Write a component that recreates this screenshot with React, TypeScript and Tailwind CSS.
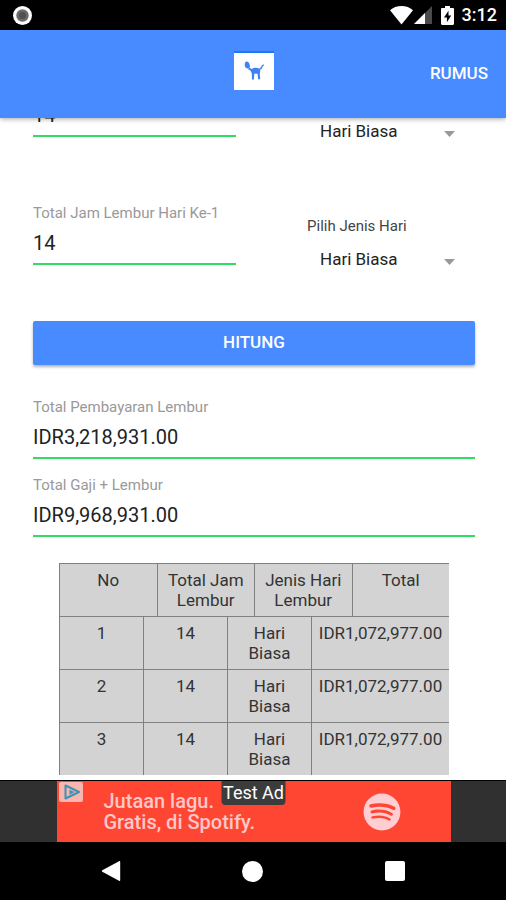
import { useId, useState } from 'react';
import { FaSpotify } from 'react-icons/fa';

const DAY_TYPES = ['Hari Biasa', 'Hari Libur'];

const RESULTS = [
  { no: 1, hours: 14, type: 'Hari Biasa', total: 'IDR1,072,977.00' },
  { no: 2, hours: 14, type: 'Hari Biasa', total: 'IDR1,072,977.00' },
  { no: 3, hours: 14, type: 'Hari Biasa', total: 'IDR1,072,977.00' },
];

function StatusBar() {
  return (
    <div className="flex h-[30px] shrink-0 items-center justify-between bg-black pl-[13px] pr-[9px] text-white">
      <svg width="19" height="19" viewBox="0 0 19 19">
        <circle cx="9.5" cy="9.5" r="9.5" fill="#fff" />
        <circle cx="9.5" cy="9.5" r="6.2" fill="#6b6b6b" />
        <circle cx="9.5" cy="9.5" r="3.5" fill="#505050" />
      </svg>
      <div className="flex items-center">
        <svg width="23" height="19" viewBox="0 0 23 19" fill="#fff">
          <path d="M0 4.2C3 1.600 7 0 11.500 0S20 1.600 23 4.200L11.500 18.500Z" />
        </svg>
        <svg className="ml-px" width="18" height="18" viewBox="0 0 18 18">
          <path d="M0 18 18 0V18Z" fill="#4a4a4a" />
          <path d="M0 18 11 7V18Z" fill="#fff" />
        </svg>
        <svg className="ml-[9px]" width="13" height="19" viewBox="0 0 13 19">
          <path d="M4 0h5v2h2.800c.7 0 1.200.5 1.200 1.200v14.600c0 .7-.5 1.200-1.200 1.200H1.200C.5 19 0 18.500 0 17.800V3.200C0 2.500.5 2 1.200 2H4Z" fill="#fff" />
          <path d="M7.500 4.800 3 11.400h2.900v4.800L10.200 9.600H7.500Z" fill="#000" />
        </svg>
        <span className="ml-2 text-[18px] font-medium leading-[30px]">3:12</span>
      </div>
    </div>
  );
}

function Logo() {
  return (
    <div className="border-t-2 border-[#1a7af0] bg-white">
      <svg width="40" height="37" viewBox="0 0 40 37">
        <g fill="#3f82f4">
          <path d="M12.600 8.500c1.600 0 2.800 1.700 3.300 3.900.3 1.600-.6 3-2 3-1.900 0-3.200-1.500-3.200-3.700 0-1.900.7-3.200 1.900-3.200Z" />
          <path d="M14.500 14.400l3.300 1.600c1.800-1.400 5.600-1.700 7.400-.3l1.200 2.400-.6 2.300.4 5.800h-2.100l-.5-5.200-1.600-.4-1.800.4-.2 5.400h-2l-.2-6-1.200-2.600-2.300-1.600Z" />
        </g>
        <path d="M24.800 16.600c1.700-.5 2.600-1.400 3-2.600.3-1 .9-1.700 2-2.100" fill="none" stroke="#3f82f4" strokeWidth="1.500" />
      </svg>
    </div>
  );
}

function Header() {
  return (
    <header className="z-10 grid h-[88px] shrink-0 grid-cols-3 items-center bg-[#488aff] shadow-[0_1px_5px_rgba(0,0,0,0.35)]">
      <span />
      <div className="flex justify-center pb-2 pl-[2px]">
        <Logo />
      </div>
      <button className="justify-self-end pr-[18px] text-[17px] font-medium text-white">RUMUS</button>
    </header>
  );
}

function Field({ label, defaultValue }: { label: string; defaultValue: string }) {
  const id = useId();
  return (
    <div className="flex flex-col pt-4">
      <label htmlFor={id} className="h-5 text-[15px] leading-5 text-[#999]">{label}</label>
      <input
        id={id}
        defaultValue={defaultValue}
        className="h-[42px] w-full border-b-2 border-[#32db64] bg-transparent text-xl text-[#222] outline-none"
      />
    </div>
  );
}

function DayTypeSelect() {
  const id = useId();
  const [value, setValue] = useState(DAY_TYPES[0]);
  return (
    <div className="flex flex-col pt-7">
      <label htmlFor={id} className="text-[15px] leading-[22px] text-[#444]">Pilih Jenis Hari</label>
      <div className="relative mt-2">
        <select
          id={id}
          value={value}
          onChange={(e) => setValue(e.target.value)}
          className="h-[30px] w-full appearance-none bg-transparent pl-[13px] text-[17px] text-[#222] outline-none"
        >
          {DAY_TYPES.map((t) => (
            <option key={t}>{t}</option>
          ))}
        </select>
        <svg className="pointer-events-none absolute right-5 top-[14px]" width="11" height="6" viewBox="0 0 11 6">
          <path d="M0 0h11L5.500 6Z" fill="#999" />
        </svg>
      </div>
    </div>
  );
}

function OvertimeRow({ day }: { day: number }) {
  return (
    <div className="grid grid-cols-[46%_38%] justify-between">
      <Field label={`Total Jam Lembur Hari Ke-${day}`} defaultValue="14" />
      <DayTypeSelect />
    </div>
  );
}

function ResultTable() {
  const head = 'flex-1 border-l border-t border-[#808080] px-[6px] py-[6px] font-normal';
  const cell = 'flex-1 border-l border-t border-[#808080] px-4 py-[6px]';
  return (
    <table className="mx-[26px] mt-[26px] block bg-[#d3d3d3] text-center text-[17px] leading-5 text-[#333]">
      <thead className="block">
        <tr className="flex">
          <th className={head}>No</th>
          <th className={head}>Total Jam Lembur</th>
          <th className={head}>Jenis Hari Lembur</th>
          <th className={head}>Total</th>
        </tr>
      </thead>
      <tbody className="block">
        {RESULTS.map((r) => (
          <tr key={r.no} className="flex">
            <td className={cell}>{r.no}</td>
            <td className={cell}>{r.hours}</td>
            <td className={cell}>{r.type}</td>
            <td className="w-[138px] border-l border-t border-[#808080] py-[6px]">{r.total}</td>
          </tr>
        ))}
      </tbody>
    </table>
  );
}

function AdBanner() {
  return (
    <div className="flex h-[62px] shrink-0 justify-center border-t border-black bg-[#303030] pl-px">
      <div className="relative flex w-[394px] items-center justify-between bg-[#ff4632] pl-[47px] pr-[50px]">
        <svg className="absolute left-[2px] top-px" width="24" height="20" viewBox="0 0 24 20">
          <rect width="24" height="20" rx="2" fill="#f9b5b0" />
          <path d="M6.500 3.500v13L20 10Z" fill="none" stroke="#3a93b5" strokeWidth="2" strokeLinejoin="round" />
          <path d="M10.500 7.800v5l5-2.700Z" fill="#3a93b5" />
        </svg>
        <p className="text-xl font-medium leading-[21px] text-[#ffc8c8]">
          Jutaan lagu.<br />Gratis, di Spotify.
        </p>
        <FaSpotify className="size-[38px] text-[#ffcdd2]" />
        <span className="absolute left-1/2 top-0 -translate-x-1/2 whitespace-nowrap rounded-b bg-[#3c3c3c] px-[2px] text-lg leading-6 text-white">
          Test Ad
        </span>
      </div>
    </div>
  );
}

function NavBar() {
  return (
    <nav className="flex h-[58px] shrink-0 items-center justify-around bg-black px-10">
      <button aria-label="Back">
        <svg width="20" height="22" viewBox="0 0 20 22" fill="#fff">
          <path d="M18 1.200c.7-.4 1.200-.1 1.200.6v18.400c0 .7-.5 1-1.200.6L1.300 11.700c-.6-.4-.6-1 0-1.400Z" />
        </svg>
      </button>
      <button aria-label="Home" className="size-[21px] rounded-full bg-white" />
      <button aria-label="Recent" className="size-5 rounded-[2px] bg-white" />
    </nav>
  );
}

export default function App() {
  return (
    <div className="flex h-screen flex-col bg-white font-['Roboto',sans-serif]">
      <StatusBar />
      <Header />
      {/* form is scrolled down, so it sits against the bottom edge */}
      <main className="flex min-h-0 flex-1 flex-col justify-end overflow-hidden pb-[5px] pl-[33px] pr-[31px]">
        <div className="flex flex-col gap-10">
          <OvertimeRow day={0} />
          <OvertimeRow day={1} />
        </div>
        <button className="mb-4 mt-[46px] h-11 shrink-0 rounded-[2px] bg-[#488aff] text-[17px] font-medium text-white shadow-[0_2px_3px_rgba(0,0,0,0.3)]">
          HITUNG
        </button>
        <Field label="Total Pembayaran Lembur" defaultValue="IDR3,218,931.00" />
        <Field label="Total Gaji + Lembur" defaultValue="IDR9,968,931.00" />
        <ResultTable />
      </main>
      <AdBanner />
      <NavBar />
    </div>
  );
}
